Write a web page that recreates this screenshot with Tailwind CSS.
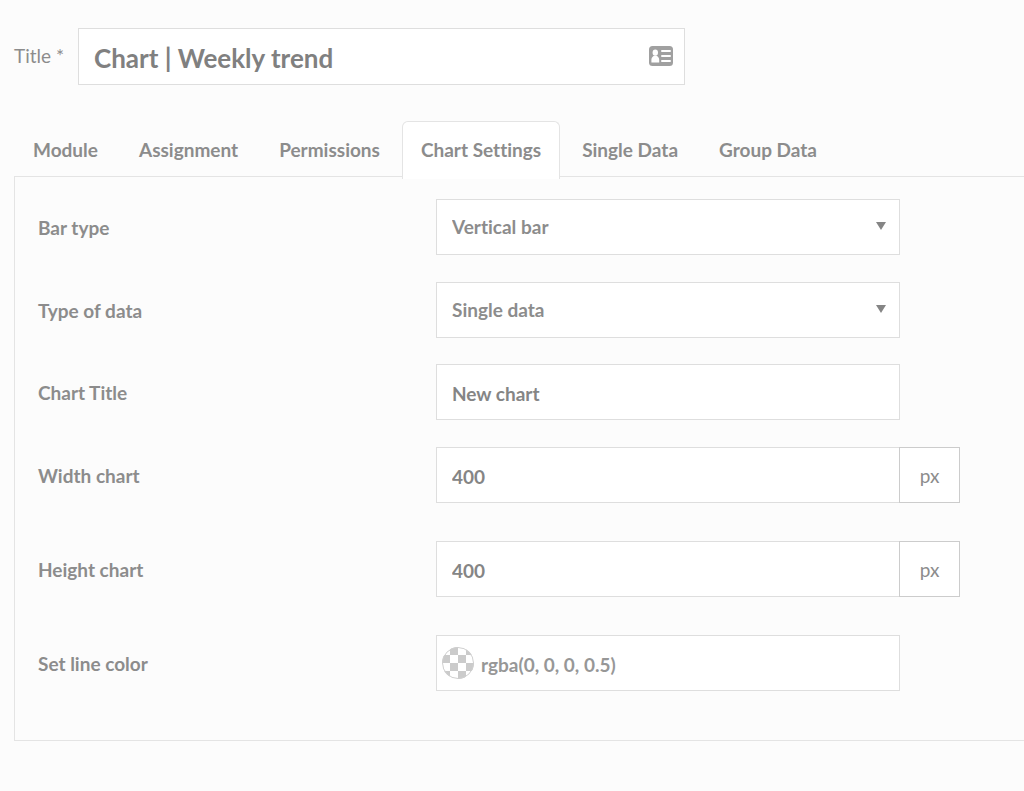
<!DOCTYPE html>
<html lang="en">

<head>
    <meta charset="UTF-8" />
    <meta name="viewport" content="width=device-width, initial-scale=1.0" />
    <title>Chart | Weekly trend</title>
    <script src="https://cdn.jsdelivr.net/npm/@tailwindcss/browser@4"></script>
</head>

<body class="min-h-screen bg-[#fcfcfc] font-['Lato',sans-serif] text-[19px] leading-6 text-[#8c8c8c] [font-variant-ligatures:none]">
    <form class="pl-3.5 pt-7">
        <!-- Title -->
        <div class="flex items-center">
            <label for="title" class="w-16 shrink-0 pb-0.5">Title *</label>
            <div class="relative w-full max-w-[607px]">
                <input id="title" type="text" value="Chart | Weekly trend" class="block h-[57px] w-full border border-[#dedede] bg-white pl-[15px] pr-12 pt-0.5 text-[26px] font-bold text-[#808080] outline-none" />
                <svg class="absolute right-3 top-[18px] h-5 w-6" viewBox="0 0 24 20" aria-hidden="true">
                    <rect width="24" height="20" rx="3.5" fill="#a0a0a0" />
                    <ellipse cx="6.3" cy="6.6" rx="2.7" ry="3.2" fill="#fff" />
                    <path d="M2.4 16.6v-2.6c0-2 1-3.4 2.6-4.2h2.6c1.6.8 2.6 2.2 2.6 4.2v2.6z" fill="#fff" />
                    <path d="M13 5h8M13 10h8M13 15h8" stroke="#fff" stroke-width="2" stroke-linecap="round" />
                </svg>
            </div>
        </div>

        <!-- Tabs -->
        <div role="tablist" class="relative mt-9 -mb-[3px] flex gap-[3px] font-bold">
            <button type="button" role="tab" aria-selected="false" class="h-[58px] px-[19px]">Module</button>
            <button type="button" role="tab" aria-selected="false" class="h-[58px] px-[19px]">Assignment</button>
            <button type="button" role="tab" aria-selected="false" class="h-[58px] px-[19px]">Permissions</button>
            <button type="button" role="tab" aria-selected="true" aria-controls="chart-settings" class="h-[58px] rounded-t-md border border-b-0 border-[#e4e4e4] bg-white px-[18px] pb-px">Chart Settings</button>
            <button type="button" role="tab" aria-selected="false" class="h-[58px] px-[19px]">Single Data</button>
            <button type="button" role="tab" aria-selected="false" class="h-[58px] px-[19px]">Group Data</button>
        </div>

        <!-- Chart settings -->
        <div id="chart-settings" role="tabpanel" class="border-y border-l border-[#e4e4e4] pb-[49px] pl-[23px] pt-[22px] font-bold">
            <div class="mb-[27px] flex items-center">
                <label for="bar-type" class="w-[398px] shrink-0 pt-0.5">Bar type</label>
                <div class="relative w-full max-w-[464px]">
                    <select id="bar-type" class="block h-14 w-full appearance-none border border-[#dedede] bg-white px-[15px] outline-none">
                        <option>Vertical bar</option>
                        <option>Horizontal bar</option>
                    </select>
                    <svg class="pointer-events-none absolute right-3.5 top-[23px] h-2 w-2.5" viewBox="0 0 10 8" aria-hidden="true"><path d="M0 0h10L5 8z" fill="#858585" /></svg>
                </div>
            </div>
            <div class="mb-[26px] flex items-center">
                <label for="data-type" class="w-[398px] shrink-0 pt-0.5">Type of data</label>
                <div class="relative w-full max-w-[464px]">
                    <select id="data-type" class="block h-14 w-full appearance-none border border-[#dedede] bg-white px-[15px] outline-none">
                        <option>Single data</option>
                        <option>Group data</option>
                    </select>
                    <svg class="pointer-events-none absolute right-3.5 top-[23px] h-2 w-2.5" viewBox="0 0 10 8" aria-hidden="true"><path d="M0 0h10L5 8z" fill="#858585" /></svg>
                </div>
            </div>
            <div class="mb-[27px] flex items-center">
                <label for="chart-title" class="w-[398px] shrink-0 pt-0.5">Chart Title</label>
                <input id="chart-title" type="text" value="New chart" class="h-14 w-full max-w-[464px] border border-[#dedede] bg-white px-[15px] pt-0.5 text-[#858585] outline-none" />
            </div>
            <div class="mb-[38px] flex items-center">
                <label for="chart-width" class="w-[398px] shrink-0 pt-0.5">Width chart</label>
                <input id="chart-width" type="text" value="400" class="h-14 w-full max-w-[464px] border border-[#dedede] bg-white px-[15px] pt-0.5 text-[#858585] outline-none" />
                <span class="-ml-px flex h-14 w-[61px] shrink-0 items-center justify-center border border-[#cccccc] bg-white pt-0.5 font-normal">px</span>
            </div>
            <div class="mb-[38px] flex items-center">
                <label for="chart-height" class="w-[398px] shrink-0 pt-0.5">Height chart</label>
                <input id="chart-height" type="text" value="400" class="h-14 w-full max-w-[464px] border border-[#dedede] bg-white px-[15px] pt-0.5 text-[#858585] outline-none" />
                <span class="-ml-px flex h-14 w-[61px] shrink-0 items-center justify-center border border-[#cccccc] bg-white pt-0.5 font-normal">px</span>
            </div>
            <div class="flex items-center">
                <label for="line-color" class="w-[398px] shrink-0 pt-0.5">Set line color</label>
                <div class="relative w-full max-w-[464px]">
                    <input id="line-color" type="text" value="rgba(0, 0, 0, 0.5)" class="block h-14 w-full border border-[#dedede] bg-white pl-11 pr-[15px] pt-0.5 text-[#979797] outline-none" />
                    <svg class="absolute left-1.5 top-3 size-8" viewBox="0 0 32 32" aria-hidden="true">
                        <defs>
                            <clipPath id="swatch"><circle cx="16" cy="16" r="16" /></clipPath>
                        </defs>
                        <g clip-path="url(#swatch)">
                            <rect width="32" height="32" fill="#fff" />
                            <path d="M8 0h8v8H8zM24 0h8v8h-8zM0 8h8v8H0zM16 8h8v8h-8zM8 16h8v8H8zM24 16h8v8h-8zM0 24h8v8H0zM16 24h8v8h-8z" fill="#cbcbcb" />
                        </g>
                        <circle cx="16" cy="16" r="15.5" fill="none" stroke="#cfcfcf" />
                    </svg>
                </div>
            </div>
        </div>
    </form>
</body>

</html>
